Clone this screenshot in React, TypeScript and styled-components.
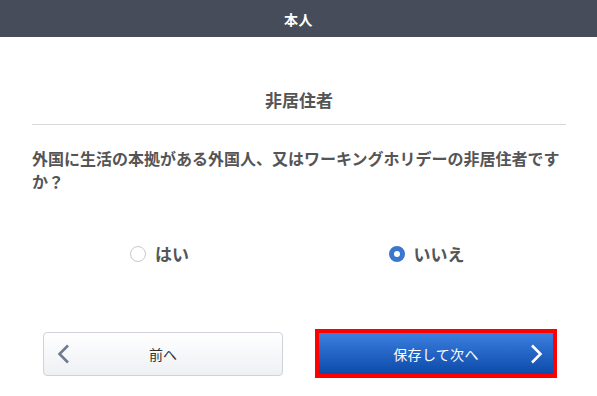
import React, { useState } from "react";
import styled, { createGlobalStyle } from "styled-components";

const Global = createGlobalStyle`
  html, body { margin: 0; padding: 0; background: #ffffff; }
  body { font-family: "Noto Sans CJK JP", "Noto Sans", sans-serif; }
  * { box-sizing: border-box; }
`;

const Page = styled.div`
  width: 597px;
  height: 396px;
  background: #ffffff;
  overflow: hidden;
`;

const Header = styled.header`
  height: 37px;
  background: #464c5a;
  color: #ffffff;
  display: flex;
  align-items: center;
  justify-content: center;
  font-size: 14px;
  font-weight: 700;
  letter-spacing: 0.5px;
`;

const Content = styled.main`
  padding: 0 31px 0 32px;
`;

const Title = styled.h1`
  margin: 0;
  padding: 51px 0 12px;
  border-bottom: 1px solid #d8d8d8;
  text-align: center;
  font-size: 17px;
  line-height: 24px;
  font-weight: 700;
  color: #555555;
`;

const Question = styled.p`
  margin: 22px 0 0;
  font-size: 16px;
  line-height: 23px;
  font-weight: 700;
  color: #555555;
`;

const Options = styled.div`
  margin-top: 48px;
  display: grid;
  grid-template-columns: 1fr 1fr;
  height: 24px;
`;

const Option = styled.label`
  display: flex;
  align-items: center;
  justify-content: center;
  gap: 9px;
  padding-right: 12px;
  cursor: pointer;
  font-size: 17px;
  font-weight: 700;
  color: #555555;
`;

const RadioMark = styled.span<{ $checked: boolean }>`
  width: 16px;
  height: 16px;
  border-radius: 50%;
  background: #ffffff;
  border: ${(p) => (p.$checked ? "5px solid #3a78cf" : "1px solid #c9c9c9")};
  flex: none;
`;

const Actions = styled.div`
  margin-top: 64px;
  padding: 0 40px 0 43px;
  display: grid;
  grid-template-columns: 240px 242px;
  column-gap: 32px;
  align-items: center;
`;

const BackButton = styled.button`
  position: relative;
  height: 44px;
  border: 1px solid #cfd2d8;
  border-radius: 4px;
  background: linear-gradient(#ffffff, #eef0f4);
  color: #333333;
  font-family: inherit;
  font-size: 14px;
  display: flex;
  align-items: center;
  justify-content: center;
  cursor: pointer;
`;

const NextButton = styled.button`
  position: relative;
  height: 49px;
  border: 4px solid #ff0000;
  background: linear-gradient(#3b7fe0, #0c4aa8);
  color: #ffffff;
  font-family: inherit;
  font-size: 14px;
  display: flex;
  align-items: center;
  justify-content: center;
  cursor: pointer;
  letter-spacing: 0.3px;
`;

const ChevronSlot = styled.span<{ $side: "left" | "right" }>`
  position: absolute;
  top: 50%;
  ${(p) => (p.$side === "left" ? "left: 13px;" : "right: 10px;")}
  transform: translateY(-50%);
  display: flex;
`;

const Chevron = ({ dir, color }: { dir: "left" | "right"; color: string }) => (
  <svg width="13" height="20" viewBox="0 0 13 20">
    <path
      d={dir === "left" ? "M11 1.5 L2.5 10 L11 18.5" : "M2 1.5 L10.5 10 L2 18.5"}
      fill="none"
      stroke={color}
      strokeWidth="2.6"
    />
  </svg>
);

export default function App() {
  const [answer, setAnswer] = useState<"yes" | "no">("no");
  return (
    <Page>
      <Global />
      <Header>本人</Header>
      <Content>
        <Title>非居住者</Title>
        <Question>
          外国に生活の本拠がある外国人、又はワーキングホリデーの非居住者ですか？
        </Question>
        <Options>
          <Option onClick={() => setAnswer("yes")}>
            <RadioMark $checked={answer === "yes"} />
            はい
          </Option>
          <Option onClick={() => setAnswer("no")}>
            <RadioMark $checked={answer === "no"} />
            いいえ
          </Option>
        </Options>
      </Content>
      <Actions>
        <BackButton>
          <ChevronSlot $side="left">
            <Chevron dir="left" color="#6f7c90" />
          </ChevronSlot>
          前へ
        </BackButton>
        <NextButton>
          保存して次へ
          <ChevronSlot $side="right">
            <Chevron dir="right" color="#ffffff" />
          </ChevronSlot>
        </NextButton>
      </Actions>
    </Page>
  );
}
